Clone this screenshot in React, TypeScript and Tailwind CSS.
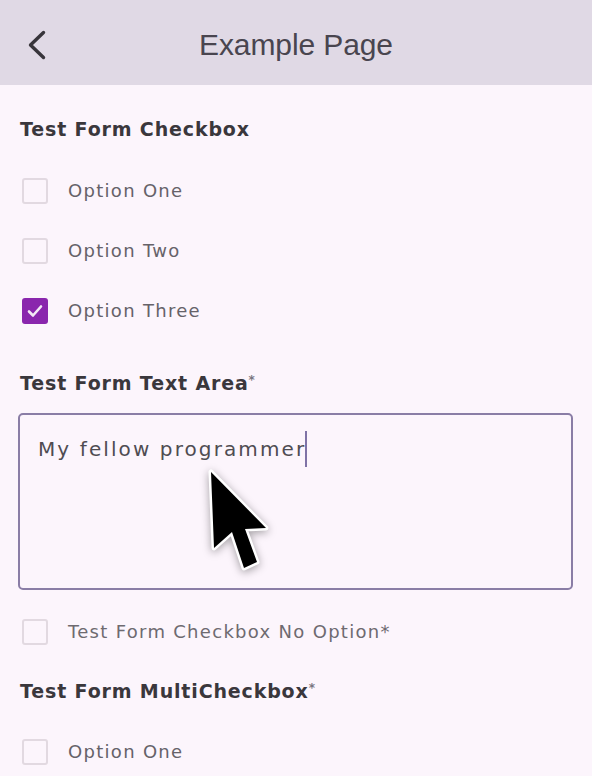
import React from "react";

const body = { fontFamily: '"DejaVu Sans", "Liberation Sans", Arial, sans-serif' };

function Box({ checked = false }: { checked?: boolean }) {
  if (checked) {
    return (
      <div className="w-[26px] h-[26px] rounded-[3px] bg-[#8a26ad] flex items-center justify-center shrink-0">
        <svg width="20" height="20" viewBox="0 0 20 20" fill="none">
          <path d="M4 10.5 L8 14.5 L16 5.5" stroke="#f3e9f5" strokeWidth="2.6" strokeLinecap="round" strokeLinejoin="round" />
        </svg>
      </div>
    );
  }
  return <div className="w-[26px] h-[26px] rounded-[3px] border-2 border-[#e2d9e1] shrink-0" />;
}

function Option({ label, checked = false, faint = false }: { label: string; checked?: boolean; faint?: boolean }) {
  return (
    <div className="h-[60px] flex items-center pl-[4px] gap-[20px]">
      <Box checked={checked} />
      <span
        style={body}
        className={
          "text-[18px] tracking-[1.3px] leading-none " + (faint ? "text-[#6e6a70]" : "text-[#666269]")
        }
      >
        {label}
      </span>
    </div>
  );
}

function Heading({ text, star = false }: { text: string; star?: boolean }) {
  return (
    <div className="h-[40px] flex items-center pl-[2px]">
      <span style={body} className="text-[19px] font-bold tracking-[0.85px] text-[#3a373c] leading-none">
        {text}
        {star && <span className="text-[12px] align-top text-[#7a7580] tracking-normal">*</span>}
      </span>
    </div>
  );
}

export default function App() {
  return (
    <div
      className="w-[592px] h-[776px] overflow-hidden bg-[#fcf5fc] flex flex-col"
      style={{ fontFamily: '"Liberation Sans", Arial, sans-serif' }}
    >
      <header className="h-[85px] shrink-0 bg-[#e0d9e5] grid grid-cols-[1fr_auto_1fr] items-center pt-[4px]">
        <div className="pl-[27px] flex items-center">
          <svg width="20" height="30" viewBox="0 0 20 30" fill="none">
            <polyline points="16.5,2.5 3.5,15 16.5,27.5" stroke="#38353b" strokeWidth="3.4" strokeLinecap="round" strokeLinejoin="round" />
          </svg>
        </div>
        <h1 className="text-[30px] leading-none text-[#49454f] font-normal tracking-[-0.1px]">Example Page</h1>
        <div />
      </header>

      <main className="flex flex-col pl-[18px] pr-[19px] pt-[24px]">
        <Heading text="Test Form Checkbox" />
        <div className="mt-[12px] flex flex-col">
          <Option label="Option One" />
          <Option label="Option Two" />
          <Option label="Option Three" checked />
        </div>

        <div className="mt-[22px]">
          <Heading text="Test Form Text Area" star />
        </div>

        <div className="relative mt-[10px] h-[177px] rounded-[5px] border-[2.5px] border-[#8a7da6] pl-[18px] pt-[16px]">
          <div className="flex items-center h-[36px]">
            <span style={body} className="text-[20px] tracking-[2.1px] text-[#4f4c52] leading-none">
              My fellow programmer
            </span>
            <span className="w-[2px] h-[36px] bg-[#7f72a6] -ml-[1px]" />
          </div>
          <svg
            className="absolute left-[182px] top-[47px]"
            width="84"
            height="118"
            viewBox="0 0 84 118"
            fill="none"
            style={{ filter: "drop-shadow(0 2px 4px rgba(0,0,0,0.35))" }}
          >
            <polygon
              points="9,10 12,86 30,70 42,106 55,100 43,67 64,66"
              fill="#000"
              stroke="#fff"
              strokeWidth="5"
              strokeLinejoin="round"
              paintOrder="stroke"
            />
          </svg>
        </div>

        <div className="mt-[12px]">
          <Option label="Test Form Checkbox No Option*" faint />
        </div>

        <div className="mt-[9px]">
          <Heading text="Test Form MultiCheckbox" star />
        </div>

        <div className="mt-[11px]">
          <Option label="Option One" />
        </div>
      </main>
    </div>
  );
}
